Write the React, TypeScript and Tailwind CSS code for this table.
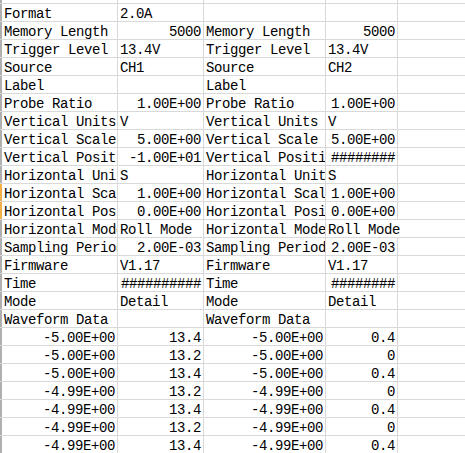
import React from "react";

type Cell = { v: string; r?: boolean; spill?: boolean };

const L = (v: string): Cell => ({ v });
const R = (v: string): Cell => ({ v, r: true });
const E: Cell = { v: "" };

const ROWS: Cell[][] = [
  [L("Format"), L("2.0A"), E, E],
  [L("Memory Length"), R("5000"), L("Memory Length"), R("5000")],
  [L("Trigger Level"), L("13.4V"), L("Trigger Level"), L("13.4V")],
  [L("Source"), L("CH1"), L("Source"), L("CH2")],
  [L("Label"), E, L("Label"), E],
  [L("Probe Ratio"), R("1.00E+00"), L("Probe Ratio"), R("1.00E+00")],
  [L("Vertical Units"), L("V"), L("Vertical Units"), L("V")],
  [L("Vertical Scale"), R("5.00E+00"), L("Vertical Scale"), R("5.00E+00")],
  [L("Vertical Position"), R("-1.00E+01"), L("Vertical Position"), R("########")],
  [L("Horizontal Units"), L("S"), L("Horizontal Units"), L("S")],
  [L("Horizontal Scale"), R("1.00E+00"), L("Horizontal Scale"), R("1.00E+00")],
  [L("Horizontal Position"), R("0.00E+00"), L("Horizontal Position"), R("0.00E+00")],
  [L("Horizontal Mode"), L("Roll Mode"), L("Horizontal Mode"), { v: "Roll Mode", spill: true }],
  [L("Sampling Period"), R("2.00E-03"), L("Sampling Period"), R("2.00E-03")],
  [L("Firmware"), L("V1.17"), L("Firmware"), L("V1.17")],
  [L("Time"), R("##########"), L("Time"), R("########")],
  [L("Mode"), L("Detail"), L("Mode"), L("Detail")],
  [L("Waveform Data"), E, L("Waveform Data"), E],
  [R("-5.00E+00"), R("13.4"), R("-5.00E+00"), R("0.4")],
  [R("-5.00E+00"), R("13.2"), R("-5.00E+00"), R("0")],
  [R("-5.00E+00"), R("13.4"), R("-5.00E+00"), R("0.4")],
  [R("-4.99E+00"), R("13.2"), R("-4.99E+00"), R("0")],
  [R("-4.99E+00"), R("13.4"), R("-4.99E+00"), R("0.4")],
  [R("-4.99E+00"), R("13.2"), R("-4.99E+00"), R("0")],
  [R("-4.99E+00"), R("13.4"), R("-4.99E+00"), R("0.4")],
];

const COL_W = ["w-[116px]", "w-[86px]", "w-[122px]", "w-[72px]"];

function Row({ cells, idx }: { cells: Cell[]; idx: number }) {
  const picked = idx === 10 || idx === 11;
  return (
    <div className="flex h-[18px] border-t border-[#d9d9d9]">
      <div className={`w-[2px] shrink-0 ${picked ? "bg-[#f2b04b]" : "bg-[#b0b0b0]"}`} />
      {cells.map((c, i) => (
        <div
          key={i}
          className={`${COL_W[i]} shrink-0 h-[17px] pt-[2px] px-[2px] leading-[17px] whitespace-nowrap border-r ${
            c.spill ? "overflow-visible border-transparent relative z-10" : "overflow-hidden border-[#d9d9d9]"
          } ${c.r ? "text-right" : "text-left"}`}
        >
          {c.v}
        </div>
      ))}
      <div className="flex-1" />
    </div>
  );
}

export default function App() {
  return (
    <div
      className="w-[465px] h-[453px] overflow-hidden bg-white text-black text-[14px] tracking-[-0.4px]"
      style={{ fontFamily: '"Liberation Mono", "Noto Sans CJK SC", monospace' }}
    >
      <div className="flex h-[3px]">
        <div className="w-[2px] shrink-0 bg-[#b0b0b0]" />
        {COL_W.map((w, i) => (
          <div key={i} className={`${w} shrink-0 border-r border-[#d9d9d9]`} />
        ))}
      </div>
      {ROWS.map((cells, idx) => (
        <Row key={idx} cells={cells} idx={idx} />
      ))}
    </div>
  );
}
